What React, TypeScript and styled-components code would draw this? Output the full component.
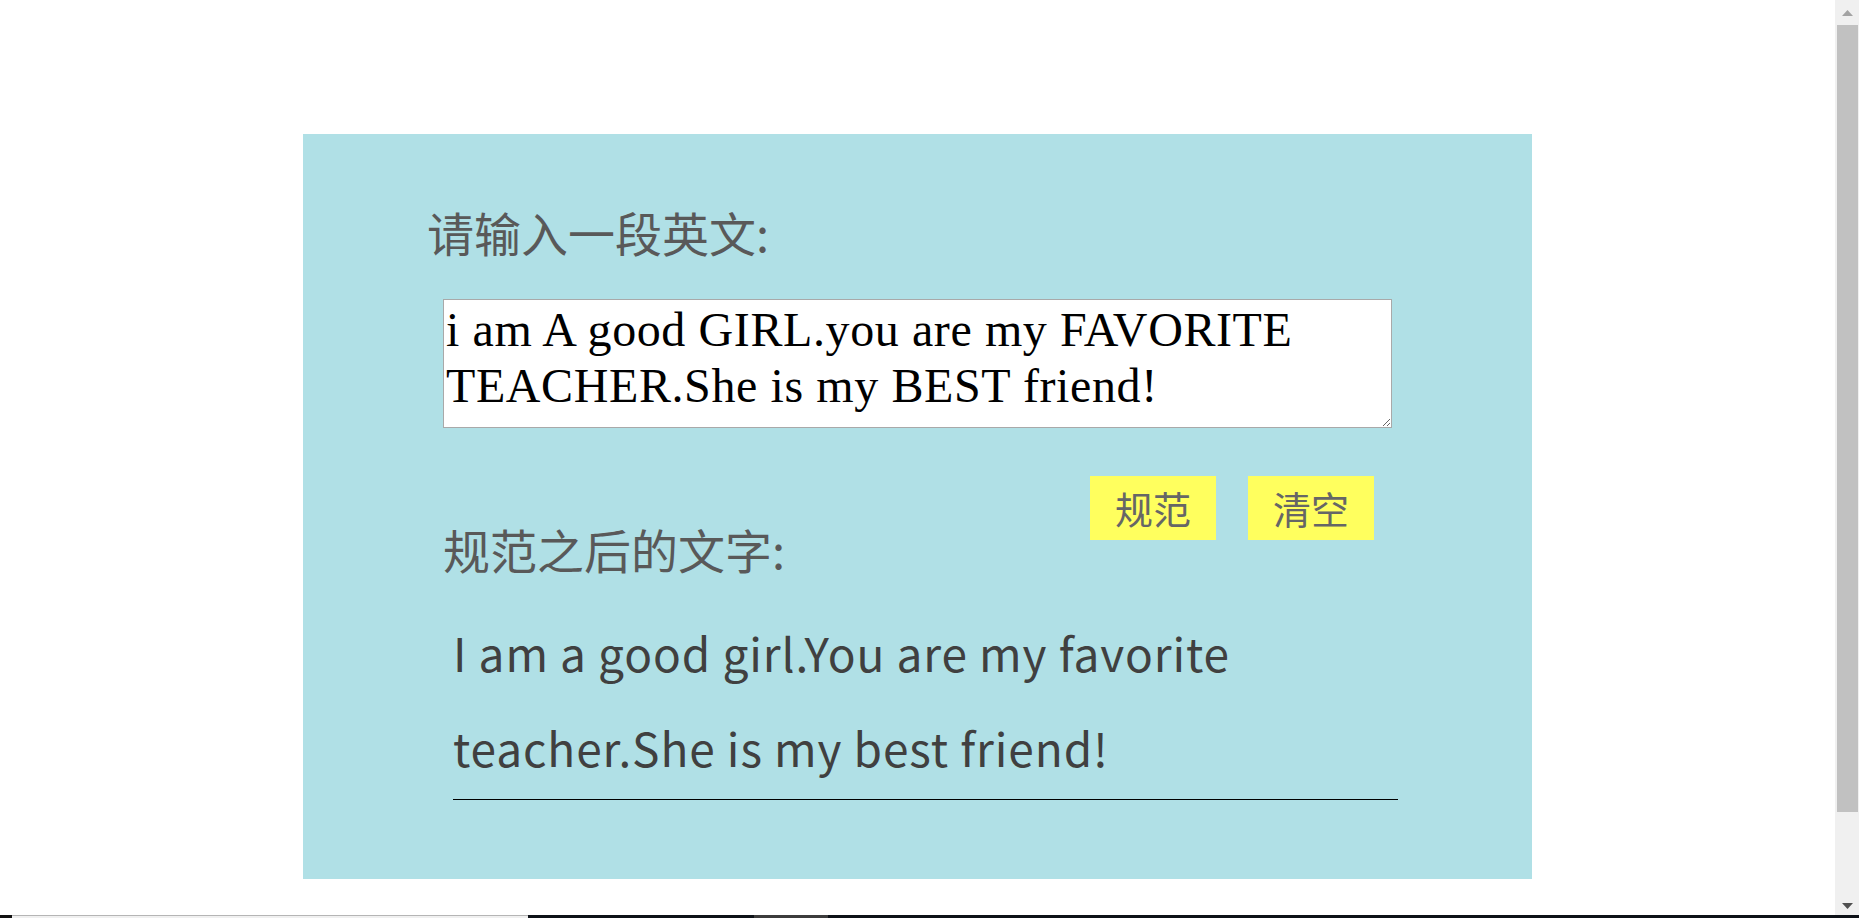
import React, { useState } from "react";
import styled, { createGlobalStyle } from "styled-components";

const GlobalStyle = createGlobalStyle`
  html, body { margin: 0; padding: 0; overflow: hidden; background: #fff; }
  #root { height: 918px; }
`;

const Page = styled.div`
  display: flex;
  flex-direction: column;
  height: 918px;
`;

const Viewport = styled.div`
  display: flex;
  flex: 1;
  min-height: 0;
`;

const Main = styled.main`
  flex: 1;
  padding: 134px 0 0 303px;
  box-sizing: border-box;
`;

const Panel = styled.section`
  width: 1229px;
  height: 745px;
  box-sizing: border-box;
  background: #b0e0e6;
  padding-left: 140px;
  display: flex;
  flex-direction: column;
  align-items: flex-start;
`;

const Heading = styled.h2<{ $indent?: number; $top?: number }>`
  margin: ${(p) => p.$top ?? 0}px 0 0 ${(p) => p.$indent ?? 0}px;
  font-family: "Noto Sans CJK SC", "Noto Sans", sans-serif;
  font-weight: 400;
  font-size: 47px;
  line-height: 60px;
  color: #595959;
  white-space: nowrap;
`;

const Input = styled.textarea`
  margin-top: 37px;
  width: 949px;
  height: 129px;
  box-sizing: border-box;
  border: 1px solid #a9a9a9;
  padding: 2px;
  font-family: "Liberation Serif", "Times New Roman", serif;
  font-size: 48px;
  line-height: 56px;
  letter-spacing: 0.6px;
  color: #000;
  background: #fff;
  outline: none;
`;

const ActionRow = styled.div`
  margin-top: 48px;
  width: 949px;
  display: flex;
  justify-content: space-between;
  align-items: flex-start;
`;

const ButtonGroup = styled.div`
  display: flex;
  gap: 32px;
  margin-right: 18px;
`;

const ActionButton = styled.button`
  width: 126px;
  height: 64px;
  border: none;
  padding: 0;
  background: #ffff5e;
  color: #666;
  font-family: "Noto Sans CJK SC", sans-serif;
  font-size: 38px;
  line-height: 64px;
  cursor: pointer;
`;

const Output = styled.p`
  margin: 26px 0 0 10px;
  width: 945px;
  padding-bottom: 4px;
  border-bottom: 1px solid #000;
  font-family: "Noto Sans CJK SC", "Noto Sans", sans-serif;
  font-size: 46px;
  line-height: 95px;
  letter-spacing: 0.9px;
  color: #404040;
`;

const ScrollTrack = styled.div`
  width: 24px;
  background: #f0f0f0;
  display: flex;
  flex-direction: column;
  align-items: center;
`;

const ArrowCell = styled.div<{ $h: number }>`
  height: ${(p) => p.$h}px;
  display: flex;
  align-items: center;
  justify-content: center;
`;

const Thumb = styled.div`
  align-self: flex-end;
  margin-right: 1px;
  width: 21px;
  height: 787px;
  background: #c1c1c1;
`;

const Spacer = styled.div`
  flex: 1;
`;

const Taskbar = styled.div`
  height: 3px;
  display: flex;
  background: #0d1117;
`;

const TaskSegment = styled.div<{ $w?: number; $bg: string; $line?: boolean }>`
  ${(p) => (p.$w ? `width: ${p.$w}px;` : "flex: 1;")}
  background: ${(p) => p.$bg};
  ${(p) => (p.$line ? "border-top: 1px solid #b5b5b5; box-sizing: border-box;" : "")}
`;

const normalize = (s: string) =>
  s
    .toLowerCase()
    .replace(/(^\s*\w|[.!?]\s*\w)/g, (m) => m.toUpperCase());

export default function App() {
  const [text, setText] = useState(
    "i am A good GIRL.you are my FAVORITE TEACHER.She is my BEST friend!"
  );
  const [result, setResult] = useState(
    "I am a good girl.You are my favorite teacher.She is my best friend!"
  );

  return (
    <>
      <GlobalStyle />
      <Page>
        <Viewport>
          <Main>
            <Panel>
              <Heading $indent={-16} $top={68}>
                请输入一段英文:
              </Heading>
              <Input value={text} onChange={(e) => setText(e.target.value)} />
              <ActionRow>
                <Heading $top={43}>规范之后的文字:</Heading>
                <ButtonGroup>
                  <ActionButton onClick={() => setResult(normalize(text))}>
                    规范
                  </ActionButton>
                  <ActionButton
                    onClick={() => {
                      setText("");
                      setResult("");
                    }}
                  >
                    清空
                  </ActionButton>
                </ButtonGroup>
              </ActionRow>
              <Output>{result}</Output>
            </Panel>
          </Main>
          <ScrollTrack>
            <ArrowCell $h={25}>
              <svg width="11" height="6" viewBox="0 0 11 6">
                <path d="M5.5 0 L11 6 L0 6 Z" fill="#a3a3a3" />
              </svg>
            </ArrowCell>
            <Thumb />
            <Spacer />
            <ArrowCell $h={18}>
              <svg width="11" height="6" viewBox="0 0 11 6">
                <path d="M0 0 L11 0 L5.5 6 Z" fill="#505050" />
              </svg>
            </ArrowCell>
          </ScrollTrack>
        </Viewport>
        <Taskbar>
          <TaskSegment $w={12} $bg="#111" />
          <TaskSegment $w={516} $bg="#f0f0f0" $line />
          <TaskSegment $w={226} $bg="#0d1117" />
          <TaskSegment $w={74} $bg="#3c3c3c" />
          <TaskSegment $bg="#0d1117" />
        </Taskbar>
      </Page>
    </>
  );
}
